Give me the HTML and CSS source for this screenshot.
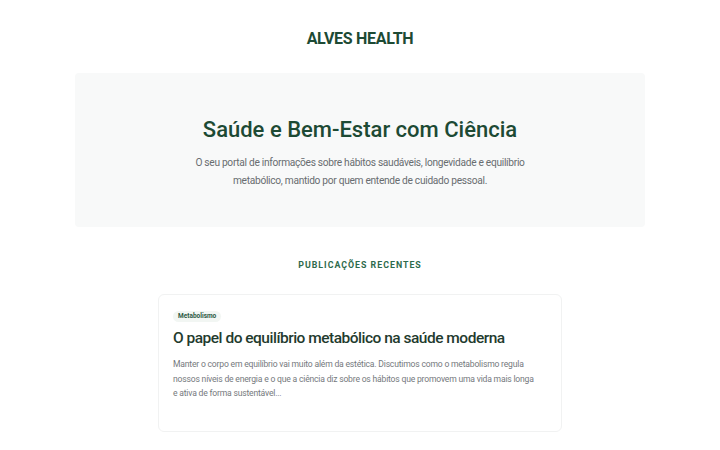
FILE: index.html
```html
<!DOCTYPE html>
<html lang="pt">
<head>
<meta charset="utf-8">
<title>Alves Health</title>
<link rel="stylesheet" href="styles.css">
</head>
<body>
<header class="site-header">
  <div class="logo">ALVES HEALTH</div>
</header>
<main class="container">
  <section class="hero">
    <h1 class="hero-title">Saúde e Bem-Estar com Ciência</h1>
    <p class="hero-text">O seu portal de informações sobre hábitos saudáveis, longevidade e equilíbrio metabólico, mantido por quem entende de cuidado pessoal.</p>
  </section>
  <section class="posts">
    <h2 class="section-title">PUBLICAÇÕES RECENTES</h2>
    <article class="card">
      <span class="badge">Metabolismo</span>
      <h3 class="card-title">O papel do equilíbrio metabólico na saúde moderna</h3>
      <p class="card-text">Manter o corpo em equilíbrio vai muito além da estética. Discutimos como o metabolismo regula nossos níveis de energia e o que a ciência diz sobre os hábitos que promovem uma vida mais longa e ativa de forma sustentável...</p>
    </article>
  </section>
</main>
</body>
</html>
```
FILE: styles.css
```css
* { box-sizing: border-box; }
html, body { margin: 0; padding: 0; background: #ffffff; }
body {
  font-family: Roboto, "Liberation Sans", Arial, sans-serif;
  color: #333;
}
.site-header {
  display: flex;
  justify-content: center;
  padding: 29px 0 0;
  height: 73px;
}
.logo {
  font-size: 16px;
  font-weight: 700;
  color: #1d4a34;
  letter-spacing: -0.3px;
  line-height: 20px;
}
.container {
  width: 570px;
  margin: 0 auto;
}
.hero {
  background: #f8f9f9;
  border-radius: 4px;
  height: 154px;
  padding: 44px 20px 0;
  text-align: center;
}
.hero-title {
  margin: 0;
  font-size: 22px;
  font-weight: 500;
  color: #1d4a34;
  line-height: 26px;
}
.hero-text {
  margin: 11px auto 0;
  width: 345px;
  font-size: 10.2px;
  letter-spacing: -0.3px;
  line-height: 18px;
  color: #686d70;
}
.posts {
  padding-top: 32px;
  display: flex;
  flex-direction: column;
  align-items: center;
}
.section-title {
  margin: 0;
  font-size: 8.8px;
  font-weight: 700;
  letter-spacing: 1px;
  color: #2e6a4c;
  line-height: 12px;
}
.card {
  margin-top: 23px;
  width: 404px;
  height: 138px;
  border: 1px solid #f1f2f2;
  border-radius: 6px;
  padding: 16px 14px 0;
  background: #fff;
  display: flex;
  flex-direction: column;
  align-items: flex-start;
}
.badge {
  display: block;
  background: #f2f6f3;
  color: #2e5a44;
  font-size: 6.5px;
  font-weight: 700;
  padding: 1px 5px;
  border-radius: 6px;
  line-height: 9px;
}
.card-title {
  margin: 6px 0 0;
  font-size: 15.5px;
  font-weight: 500;
  letter-spacing: -0.5px;
  color: #1f3b2e;
  line-height: 20px;
}
.card-text {
  margin: 9px 0 0;
  width: 362px;
  font-size: 8.6px;
  letter-spacing: -0.2px;
  line-height: 14.6px;
  color: #75797d;
}
```
